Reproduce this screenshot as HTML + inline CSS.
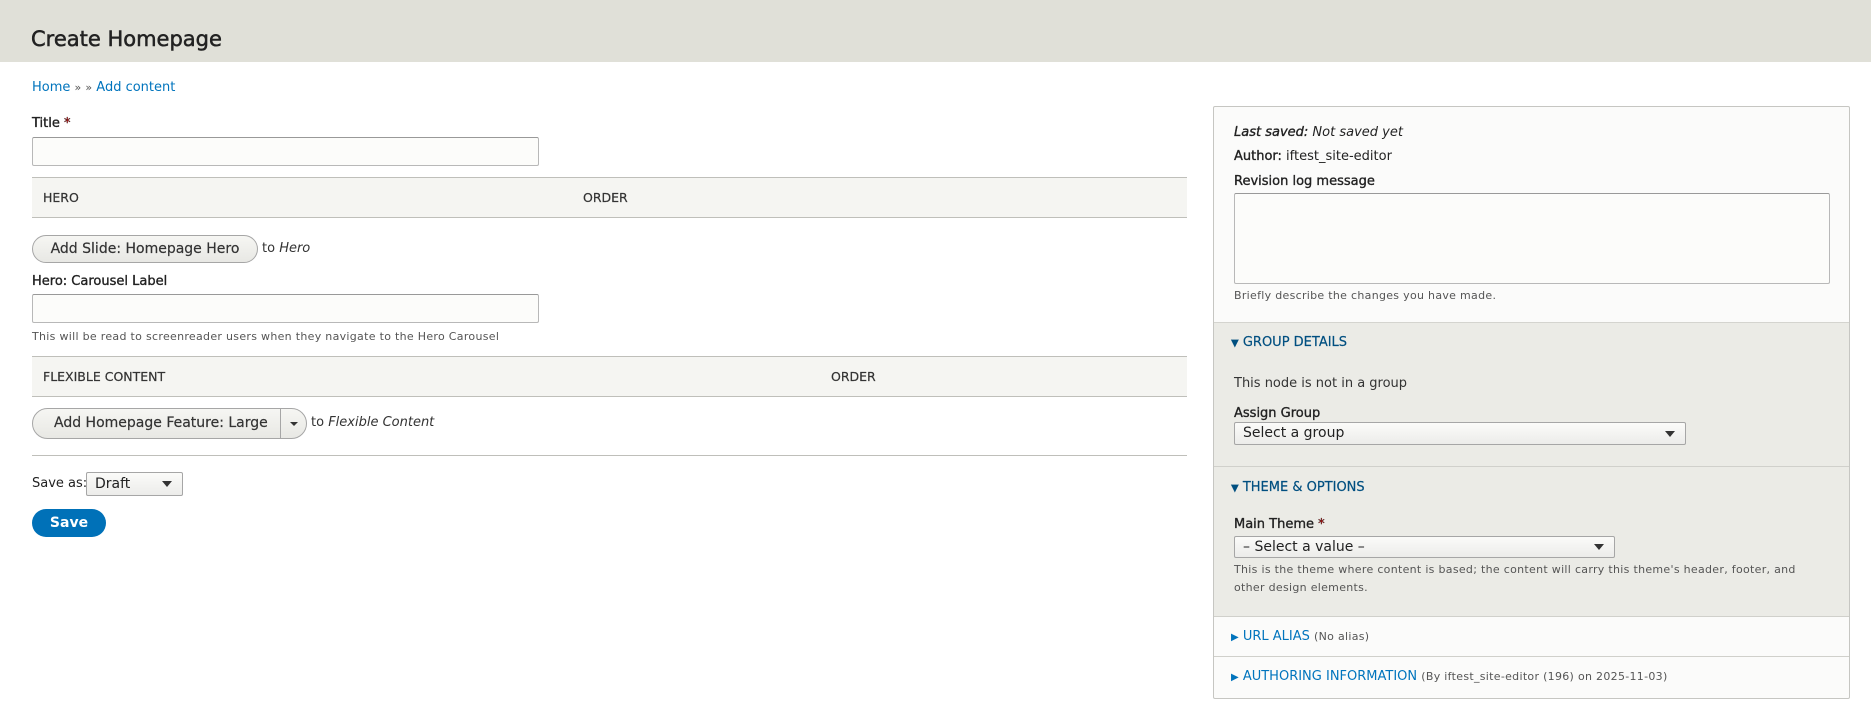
<!DOCTYPE html>
<html><head><meta charset="utf-8"><style>
*{box-sizing:border-box;margin:0;padding:0}
body{width:1871px;height:710px;position:relative;background:#fff;font-family:"DejaVu Sans","Liberation Sans",sans-serif;color:#222;font-size:13px;overflow:hidden}
.a{position:absolute;white-space:nowrap}
.hd{left:0;top:0;width:1871px;height:62px;background:#e0e0d8}
.lb{font-size:13px;color:#222;-webkit-text-stroke:0.35px #222}
.inp{position:absolute;border:1px solid #b8b8b8;border-top-color:#999;background:#fcfcfa;border-radius:2px}
.tbl{position:absolute;left:32px;width:1155px;background:#f5f5f2;border-top:1px solid #bfbfba;border-bottom:1px solid #bfbfba}
.th{position:absolute;font-size:12.5px;text-transform:uppercase;color:#333;-webkit-text-stroke:0.2px #333}
.btn{position:absolute;border:1px solid #a6a6a6;border-radius:20px;background:linear-gradient(#f6f6f3,#e8e8e4);font-size:14px;color:#333;text-align:center;-webkit-text-stroke:0.2px #333}
.sm{font-size:11px;color:#555;letter-spacing:0.3px}
.sel{position:absolute;border:1px solid #a6a6a6;border-radius:2px;background:linear-gradient(#fbfbf9,#ececea);font-size:14px;padding-left:8px;color:#222}
.sel:after{content:"";position:absolute;right:10px;top:50%;margin-top:-3px;border-left:5px solid transparent;border-right:5px solid transparent;border-top:6px solid #333}
.blue{color:#0074bd}
.sh{color:#004f80;font-size:13px;-webkit-text-stroke:0.2px #004f80}
</style></head><body>
<div class="a hd"></div>
<div class="a" style="left:31px;top:27px;font-size:21px;color:#222;-webkit-text-stroke:0.5px #222">Create Homepage</div>
<div class="a" style="left:32px;top:80px;font-size:13px"><span class="blue">Home</span> <span style="color:#555;font-size:11px">»</span> <span style="color:#555;font-size:11px">»</span> <span class="blue">Add content</span></div>
<div class="a lb" style="left:32px;top:116px">Title <span style="color:#e00">*</span></div>
<div class="inp" style="left:32px;top:137px;width:507px;height:29px"></div>
<div class="tbl" style="top:177px;height:41px"><span class="th" style="left:11px;top:12px">Hero</span><span class="th" style="left:551px;top:12px">Order</span></div>
<div class="btn" style="left:32px;top:235px;width:226px;height:28px;line-height:26px">Add Slide: Homepage Hero</div>
<div class="a" style="left:262px;top:241px;font-size:13px;color:#333">to <i>Hero</i></div>
<div class="a lb" style="left:32px;top:274px">Hero: Carousel Label</div>
<div class="inp" style="left:32px;top:294px;width:507px;height:29px"></div>
<div class="a sm" style="left:32px;top:330px">This will be read to screenreader users when they navigate to the Hero Carousel</div>
<div class="tbl" style="top:356px;height:41px"><span class="th" style="left:11px;top:12px">Flexible Content</span><span class="th" style="left:799px;top:12px">Order</span></div>
<div class="btn" style="left:32px;top:408px;width:275px;height:31px;line-height:29px;text-align:left;padding-left:21px">Add Homepage Feature: Large<span style="position:absolute;left:247px;top:0;width:1px;height:29px;background:#a6a6a6"></span><span style="position:absolute;left:257px;top:13px;border-left:4px solid transparent;border-right:4px solid transparent;border-top:4px solid #333"></span></div>
<div class="a" style="left:311px;top:415px;font-size:13px;color:#333">to <i>Flexible Content</i></div>
<div class="a" style="left:32px;top:455px;width:1155px;height:1px;background:#bfbfba"></div>
<div class="a" style="left:32px;top:476px;font-size:13px">Save as:</div>
<div class="sel" style="left:86px;top:472px;width:97px;height:24px;line-height:22px">Draft</div>
<div class="a" style="left:32px;top:509px;width:74px;height:28px;border-radius:20px;background:#0071b8;color:#fff;font-weight:bold;font-size:14px;text-align:center;line-height:28px">Save</div>

<div class="a" style="left:1213px;top:106px;width:637px;height:593px;border:1px solid #c6c6c2;border-radius:2px;background:#fbfbfa"></div>
<div class="a" style="left:1234px;top:125px"><i class="lb">Last saved:</i> <i>Not saved yet</i></div>
<div class="a" style="left:1234px;top:149px"><span class="lb">Author:</span> iftest_site-editor</div>
<div class="a lb" style="left:1234px;top:174px">Revision log message</div>
<div class="inp" style="left:1234px;top:193px;width:596px;height:91px"></div>
<div class="a sm" style="left:1234px;top:289px">Briefly describe the changes you have made.</div>
<div class="a" style="left:1214px;top:322px;width:635px;height:294px;background:#ebebe6;border-top:1px solid #d4d4cf"></div>
<div class="a" style="left:1214px;top:466px;width:635px;height:1px;background:#d0d0cb"></div>
<div class="a sh" style="left:1231px;top:335px"><span style="font-size:10px">▼</span> GROUP DETAILS</div>
<div class="a" style="left:1234px;top:376px;color:#333">This node is not in a group</div>
<div class="a lb" style="left:1234px;top:406px">Assign Group</div>
<div class="sel" style="left:1234px;top:422px;width:452px;height:23px;line-height:21px">Select a group</div>
<div class="a sh" style="left:1231px;top:480px"><span style="font-size:10px">▼</span> THEME &amp; OPTIONS</div>
<div class="a lb" style="left:1234px;top:517px">Main Theme <span style="color:#e00">*</span></div>
<div class="sel" style="left:1234px;top:536px;width:381px;height:22px;line-height:20px">– Select a value –</div>
<div class="a sm" style="left:1234px;top:561px;line-height:18px">This is the theme where content is based; the content will carry this theme's header, footer, and<br>other design elements.</div>
<div class="a" style="left:1214px;top:616px;width:635px;height:1px;background:#d0d0cb"></div>
<div class="a" style="left:1231px;top:629px"><span class="blue"><span style="font-size:10px">▶</span> URL ALIAS</span> <span class="sm">(No alias)</span></div>
<div class="a" style="left:1214px;top:656px;width:635px;height:1px;background:#d0d0cb"></div>
<div class="a" style="left:1231px;top:669px"><span class="blue"><span style="font-size:10px">▶</span> AUTHORING INFORMATION</span> <span class="sm">(By iftest_site-editor (196) on 2025-11-03)</span></div>
</body></html>
